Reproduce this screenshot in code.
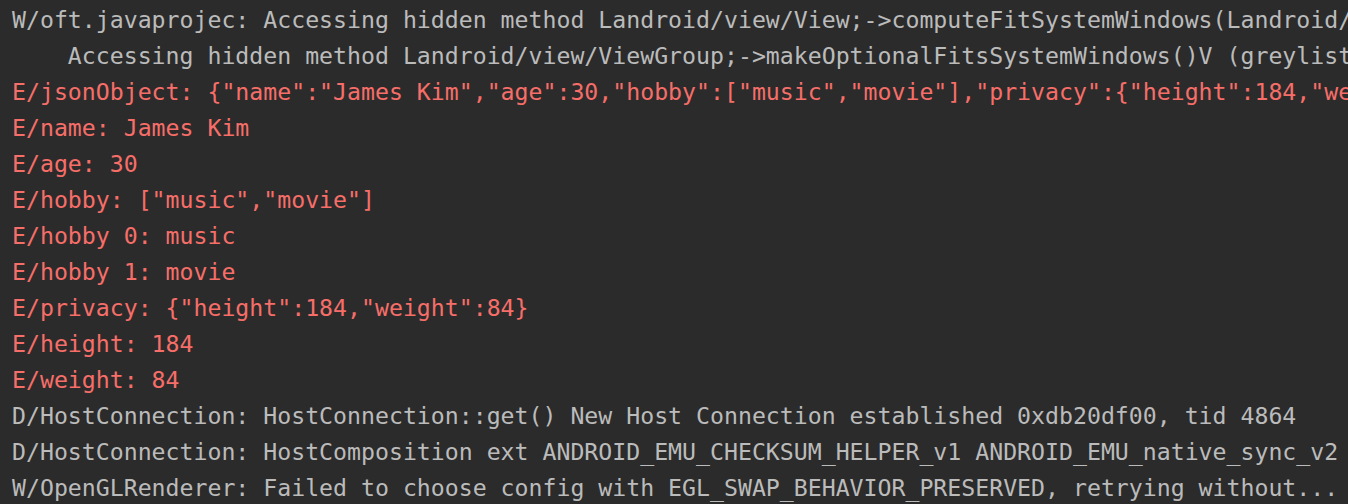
import React from "react";

const GREY = "text-[#bbbbbb]";
const RED = "text-[#f76e69]";

const lines: { t: string; c: string }[] = [
  {
    t: "W/oft.javaprojec: Accessing hidden method Landroid/view/View;->computeFitSystemWindows(Landroid/graphics/Rect;Landroid/graphics/Rect;)Z (greylist, reflection)",
    c: GREY,
  },
  {
    t: "    Accessing hidden method Landroid/view/ViewGroup;->makeOptionalFitsSystemWindows()V (greylist, reflection)",
    c: GREY,
  },
  {
    t: 'E/jsonObject: {"name":"James Kim","age":30,"hobby":["music","movie"],"privacy":{"height":184,"weight":84}}',
    c: RED,
  },
  { t: "E/name: James Kim", c: RED },
  { t: "E/age: 30", c: RED },
  { t: 'E/hobby: ["music","movie"]', c: RED },
  { t: "E/hobby 0: music", c: RED },
  { t: "E/hobby 1: movie", c: RED },
  { t: 'E/privacy: {"height":184,"weight":84}', c: RED },
  { t: "E/height: 184", c: RED },
  { t: "E/weight: 84", c: RED },
  {
    t: "D/HostConnection: HostConnection::get() New Host Connection established 0xdb20df00, tid 4864",
    c: GREY,
  },
  {
    t: "D/HostConnection: HostComposition ext ANDROID_EMU_CHECKSUM_HELPER_v1 ANDROID_EMU_native_sync_v2 ANDROID_EMU_native_sync_v3",
    c: GREY,
  },
  {
    t: "W/OpenGLRenderer: Failed to choose config with EGL_SWAP_BEHAVIOR_PRESERVED, retrying without...",
    c: GREY,
  },
];

export default function App() {
  return (
    <div className="w-[1348px] h-[504px] overflow-hidden bg-[#2b2b2b] pt-[2px] pl-[12px] font-['DejaVu_Sans_Mono',monospace] text-[23.2px] leading-[36px]">
      {lines.map((l, i) => (
        <div key={i} className={`whitespace-pre ${l.c}`}>
          {l.t}
        </div>
      ))}
    </div>
  );
}
